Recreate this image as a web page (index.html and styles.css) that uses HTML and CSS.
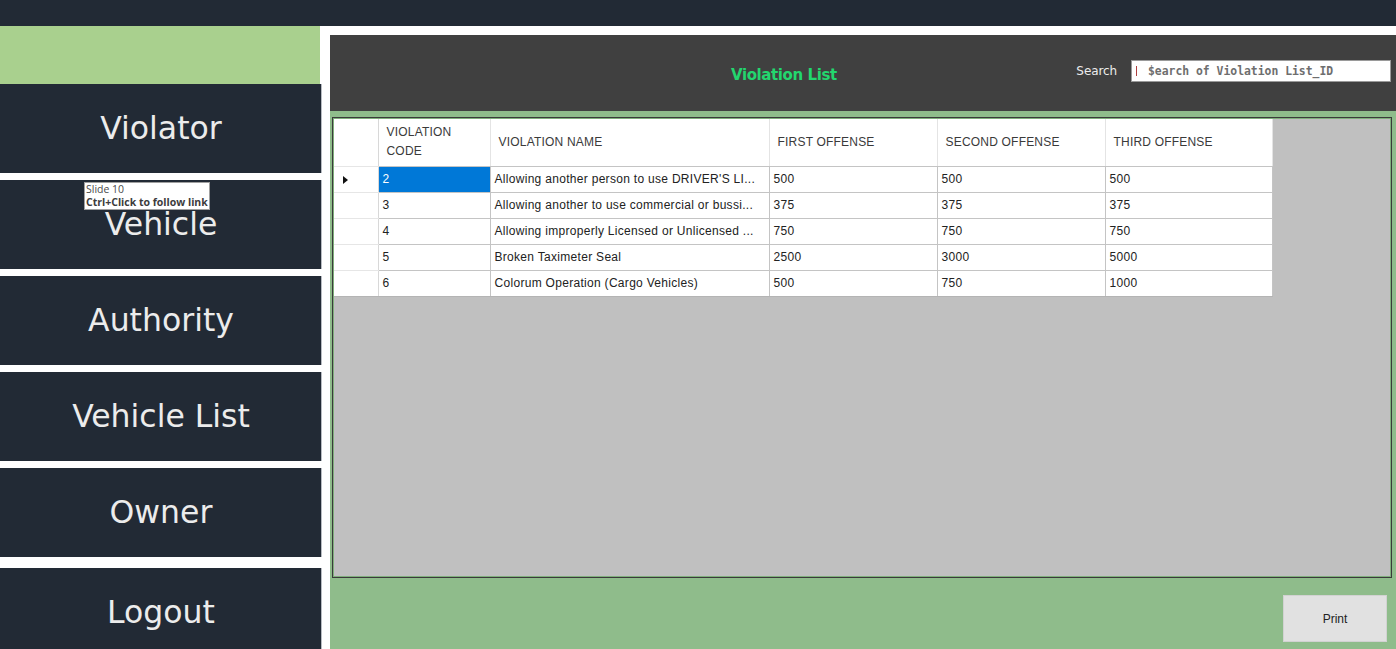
FILE: index.html
```html
<!DOCTYPE html>
<html>
<head>
<meta charset="utf-8">
<link rel="stylesheet" href="styles.css">
</head>
<body>
<div class="topbar"></div>
<div class="layout">
  <aside class="sidebar">
    <div class="side-top"></div>
    <nav class="nav">
      <div class="nav-btn">Violator</div>
      <div class="nav-btn">Vehicle</div>
      <div class="nav-btn">Authority</div>
      <div class="nav-btn">Vehicle List</div>
      <div class="nav-btn">Owner</div>
      <div class="nav-btn nav-last">Logout</div>
    </nav>
    <div class="tooltip"><div>Slide 10</div><div class="tt-b">Ctrl+Click to follow link</div></div>
  </aside>
  <main class="main">
    <header class="head">
      <div class="title">Violation List</div>
      <div class="search">
        <span class="search-label">Search</span>
        <div class="search-box"><span class="caret"></span><span class="ph">$earch of Violation List_ID</span></div>
      </div>
    </header>
    <section class="panel">
      <div class="grid">
        <table class="tbl">
          <colgroup>
            <col class="c0"><col class="c1"><col class="c2"><col class="c3"><col class="c4"><col class="c5">
          </colgroup>
          <thead>
            <tr>
              <th class="rh"></th>
              <th>VIOLATION<br>CODE</th>
              <th>VIOLATION NAME</th>
              <th>FIRST OFFENSE</th>
              <th>SECOND OFFENSE</th>
              <th>THIRD OFFENSE</th>
            </tr>
          </thead>
          <tbody>
            <tr><td class="rh"><span class="arrow"></span></td><td class="sel">2</td><td>Allowing another person to use DRIVER'S LI...</td><td>500</td><td>500</td><td>500</td></tr>
            <tr><td class="rh"></td><td>3</td><td>Allowing another to use commercial or bussi...</td><td>375</td><td>375</td><td>375</td></tr>
            <tr><td class="rh"></td><td>4</td><td>Allowing improperly Licensed or Unlicensed ...</td><td>750</td><td>750</td><td>750</td></tr>
            <tr><td class="rh"></td><td>5</td><td>Broken Taximeter Seal</td><td>2500</td><td>3000</td><td>5000</td></tr>
            <tr><td class="rh"></td><td>6</td><td>Colorum Operation (Cargo Vehicles)</td><td>500</td><td>750</td><td>1000</td></tr>
          </tbody>
        </table>
      </div>
      <div class="actions">
        <button class="print">Print</button>
      </div>
    </section>
  </main>
</div>
</body>
</html>
```
FILE: styles.css
```css
* { box-sizing: border-box; }
html, body { margin: 0; padding: 0; background: #ffffff; height: 649px; overflow: hidden; }
body { font-family: "DejaVu Sans", sans-serif; }

.topbar { height: 26px; background: #222a35; }

.layout { display: flex; height: 623px; }

.sidebar { width: 322px; flex: none; position: relative; }
.side-top { height: 58px; width: 320px; background: #a9d08e; }
.nav { display: flex; flex-direction: column; gap: 7px; }
.nav-btn {
  height: 89px; width: 322px; flex: none;
  background: #222a35;
  border-right: 1px solid #b8bcc2;
  color: #ececec;
  font-family: "DejaVu Sans", sans-serif;
  font-weight: normal;
  font-size: 31.5px;
  display: flex; align-items: center; justify-content: center;
  padding-left: 1px; padding-bottom: 2px;
}
.nav-last { margin-top: 4px; }

.tooltip {
  position: absolute; left: 84px; top: 156px;
  width: 126px; height: 28px;
  background: #ffffff; border: 1px solid #a0a0a0;
  font-family: "Open Sans", "Noto Sans", sans-serif;
  font-size: 10.5px; line-height: 12.5px; color: #4a4a4a;
  padding: 0 0 0 1px;
  white-space: nowrap;
}
.tt-b { font-weight: bold; color: #3c3c3c; }

.main { flex: 1; margin: 9px 0 0 8px; display: flex; flex-direction: column; min-width: 0; }

.head {
  height: 76px; background: #404040;
  display: flex; align-items: center;
  padding-left: 401px; padding-right: 5px;
}
.title {
  color: #23d66e; font-weight: bold; font-size: 15px;
  letter-spacing: -0.4px; margin-top: 3px;
}
.search { margin-left: auto; display: flex; align-items: center; margin-top: -5px; }
.search-label { color: #ececec; font-family: "DejaVu Sans", sans-serif; font-size: 12px; margin-right: 14px; letter-spacing: -0.1px; }
.search-box {
  width: 260px; height: 22px; background: #ffffff; border: 1px solid #9a9a9a;
  display: flex; align-items: center; padding-left: 4px;
}
.caret { width: 1px; height: 10px; background: #b04040; margin-right: 11px; }
.ph { font-family: "DejaVu Sans Mono", monospace; font-weight: bold; font-size: 11.4px; color: #6e6e6e; white-space: pre; }

.panel {
  flex: 1; background: #8fbc8b;
  padding: 6px 4px 7px 2px;
  display: flex; flex-direction: column;
}
.grid {
  height: 461px; background: #c0c0c0;
  border: 1px solid #3a3a3a;
  box-shadow: inset 0 0 0 1px #7fae7b;
  padding: 1px;
}
.tbl {
  border-collapse: collapse; table-layout: fixed; width: 938px;
  font-family: "Liberation Sans", sans-serif; font-size: 12px; color: #222;
  background: #ffffff;
}
.c0 { width: 44px; } .c1 { width: 112px; } .c2 { width: 279px; }
.c3 { width: 168px; } .c4 { width: 168px; } .c5 { width: 167px; }
.tbl th {
  height: 47px; text-align: left; font-weight: normal;
  color: #3a3a3a; font-size: 12px; line-height: 19px;
  padding: 0 8px; border-right: 1px solid #e4e4e4; border-bottom: 1px solid #c4c4c4;
  letter-spacing: 0.2px;
}
.tbl td {
  height: 26px; padding: 0 4px; white-space: nowrap; overflow: hidden;
  border-right: 1px solid #c4c4c4; border-bottom: 1px solid #c4c4c4;
  letter-spacing: 0.3px;
}
.tbl td.rh, .tbl th.rh { border-bottom-color: #e6e6e6; border-right-color: #d8d8d8; }
.tbl tbody tr:last-child td { border-bottom-color: #b4b4b4; }
.tbl td.sel { background: #0078d7; color: #ffffff; }
.arrow {
  display: inline-block; margin-left: 5px;
  width: 0; height: 0;
  border-top: 4.5px solid transparent; border-bottom: 4.5px solid transparent;
  border-left: 5px solid #111;
  vertical-align: middle;
}

.actions { flex: 1; display: flex; justify-content: flex-end; align-items: flex-end; }
.print {
  width: 104px; height: 47px; background: #e1e1e1; border: 1px solid #d2d2d2;
  font-family: "Liberation Sans", sans-serif; font-size: 12px; color: #222;
  margin-right: 5px; padding: 0;
}
```
